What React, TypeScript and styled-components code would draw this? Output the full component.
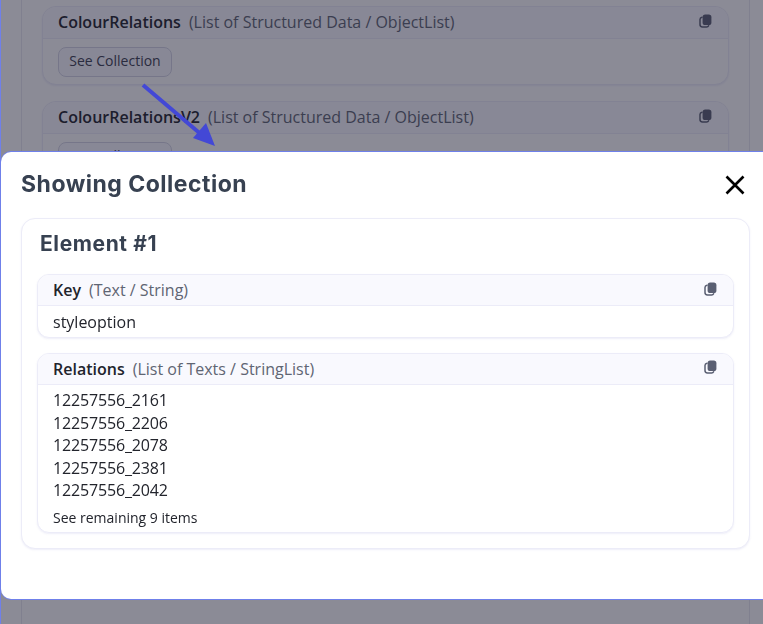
import styled, { createGlobalStyle } from "styled-components";

const GlobalStyle = createGlobalStyle`
    html, body {
        margin: 0;
        height: 100%;
        overflow: hidden;
        background: #fff;
        font-family: "Open Sans", "Liberation Sans", sans-serif;
    }
    #root {
        height: 100%;
    }
`;

const Page = styled.div`
    height: 100vh;
    box-sizing: border-box;
    padding: 0 13px 0 21px;
    border-left: 1px solid #6f80ea;
    overflow: hidden;
`;

const BackPanel = styled.div`
    height: 100%;
    box-sizing: border-box;
    width: 729px;
    margin-left: -1px;
    padding: 6px 20px 0;
    display: flex;
    flex-direction: column;
    gap: 16px;
    border-left: 1px solid #e9e9f0;
    border-right: 1px solid #e9e9f0;
`;

const Card = styled.section<{ $dense?: boolean }>`
    background: #fff;
    border: 1px solid #ececf8;
    border-radius: ${p => (p.$dense ? 12 : 14)}px;
    box-shadow: 0 1px 2px rgba(90, 90, 190, 0.1);
    overflow: hidden;
`;

const CardHeader = styled.header<{ $dense?: boolean }>`
    display: flex;
    align-items: center;
    box-sizing: border-box;
    height: ${p => (p.$dense ? 31 : 31.5)}px;
    padding: ${p => (p.$dense ? "0 15px" : "0 15px 1px")};
    background: #f9f9fe;
    border-bottom: 1px solid #ececf8;
    font-size: 16px;
    line-height: 20px;
`;

const FieldName = styled.strong`
    font-weight: 600;
    color: #22242c;
`;

const FieldType = styled.span`
    margin-left: 8px;
    flex: 1;
    color: #5f6573;
`;

const CopyButton = styled.span<{ $dense?: boolean }>`
    display: flex;
    color: #5a5f72;
    margin-top: ${p => (p.$dense ? -3 : -2)}px;
    margin-right: 1px;
`;

const CardBody = styled.div<{ $dense?: boolean }>`
    padding: ${p => (p.$dense ? "4.5px 15px 3.5px" : "8px 15px 7.5px")};
    font-size: 16px;
    line-height: 22.5px;
    color: #22242c;
`;

const SeeCollection = styled.button`
    display: block;
    width: 114px;
    height: 30px;
    padding: 0 0 2px;
    background: #f9f9fe;
    border: 1px solid #d4d5e4;
    border-radius: 8px;
    font: 400 14px "Open Sans", sans-serif;
    color: #3c4050;
`;

const Backdrop = styled.div`
    position: fixed;
    inset: 0 0 0 1px;
    background: rgba(24, 24, 46, 0.5);
`;

const Arrow = styled.svg`
    position: fixed;
    left: 135px;
    top: 78px;
`;

const Modal = styled.div`
    position: fixed;
    left: 1px;
    top: 152px;
    width: 780px;
    height: 447px;
    box-sizing: border-box;
    padding: 0 33px 0 20px;
    background: #fff;
    border-radius: 10px;
    box-shadow: 0 -1px 0 #6f80ea, 0 1px 0 #6f80ea;
`;

const ModalHeader = styled.div`
    display: flex;
    align-items: center;
    justify-content: space-between;
    height: 66px;
    box-sizing: border-box;
    padding: 0 3px 2px 0;
`;

const ModalTitle = styled.h2`
    margin: 0;
    font: 700 23px Inter, "Open Sans", sans-serif;
    letter-spacing: 0.5px;
    color: #374151;
`;

const CloseIcon = styled.svg`
    display: block;
    margin-top: 2px;
`;

const ElementCard = styled.section`
    width: 729px;
    box-sizing: border-box;
    padding: 0 15px 15px;
    background: #fff;
    border: 1px solid #ececf8;
    border-radius: 14px;
    box-shadow: 0 1px 2px rgba(90, 90, 190, 0.1);
    display: flex;
    flex-direction: column;
    gap: 15px;
`;

const ElementTitle = styled.h3`
    margin: 0 0 3px;
    padding: 13px 3px 0;
    font: 700 21px/24px Inter, "Open Sans", sans-serif;
    letter-spacing: 0.6px;
    color: #374151;
`;

const RelationItem = styled.div`
    letter-spacing: -0.15px;
`;

const RemainingLink = styled.div`
    margin-top: 6.5px;
    font-size: 14px;
    line-height: 20px;
    color: #22242c;
`;

const CopyIcon = () => (
    <svg width="13" height="14" viewBox="0 0 13 14" fill="none">
        <path d="M3 3.2C1.7 3.4 1 4.2 1 5.4v5.2C1 12.1 2 13 3.4 13h4.2c1 0 1.7-.5 2-1.3" stroke="currentColor" strokeWidth="1.5" strokeLinecap="round" />
        <rect x="3.6" y="0.6" width="8.8" height="10.4" rx="2.6" fill="currentColor" />
    </svg>
);

const Field = ({ name, type, dense, children }: { name: string, type: string, dense?: boolean, children: React.ReactNode }) => (
    <Card $dense={dense}>
        <CardHeader $dense={dense}>
            <FieldName>{name}</FieldName>
            <FieldType>({type})</FieldType>
            <CopyButton $dense={dense}><CopyIcon /></CopyButton>
        </CardHeader>
        <CardBody $dense={dense}>{children}</CardBody>
    </Card>
);

const relations = ["12257556_2161", "12257556_2206", "12257556_2078", "12257556_2381", "12257556_2042"];

export default function App() {
    return (
        <>
            <GlobalStyle />
            <Page>
                <BackPanel>
                    <Field name="ColourRelations" type="List of Structured Data / ObjectList">
                        <SeeCollection>See Collection</SeeCollection>
                    </Field>
                    <Field name="ColourRelationsV2" type="List of Structured Data / ObjectList">
                        <SeeCollection>See Collection</SeeCollection>
                    </Field>
                </BackPanel>
            </Page>
            <Backdrop />
            <Arrow width="90" height="76" viewBox="0 0 90 76">
                <path d="M8 7L68 58" stroke="#4348d6" strokeWidth="4" />
                <path d="M80 68L58 60L71 45Z" fill="#4348d6" />
            </Arrow>
            <Modal>
                <ModalHeader>
                    <ModalTitle>Showing Collection</ModalTitle>
                    <CloseIcon width="20" height="20" viewBox="0 0 20 20">
                        <path d="M1.5 1.5L18.5 18.5M18.5 1.5L1.5 18.5" stroke="#000" strokeWidth="2.6" />
                    </CloseIcon>
                </ModalHeader>
                <ElementCard>
                    <ElementTitle>Element #1</ElementTitle>
                    <Field name="Key" type="Text / String" dense>styleoption</Field>
                    <Field name="Relations" type="List of Texts / StringList" dense>
                        {relations.map(r => <RelationItem key={r}>{r}</RelationItem>)}
                        <RemainingLink>See remaining 9 items</RemainingLink>
                    </Field>
                </ElementCard>
            </Modal>
        </>
    );
}
